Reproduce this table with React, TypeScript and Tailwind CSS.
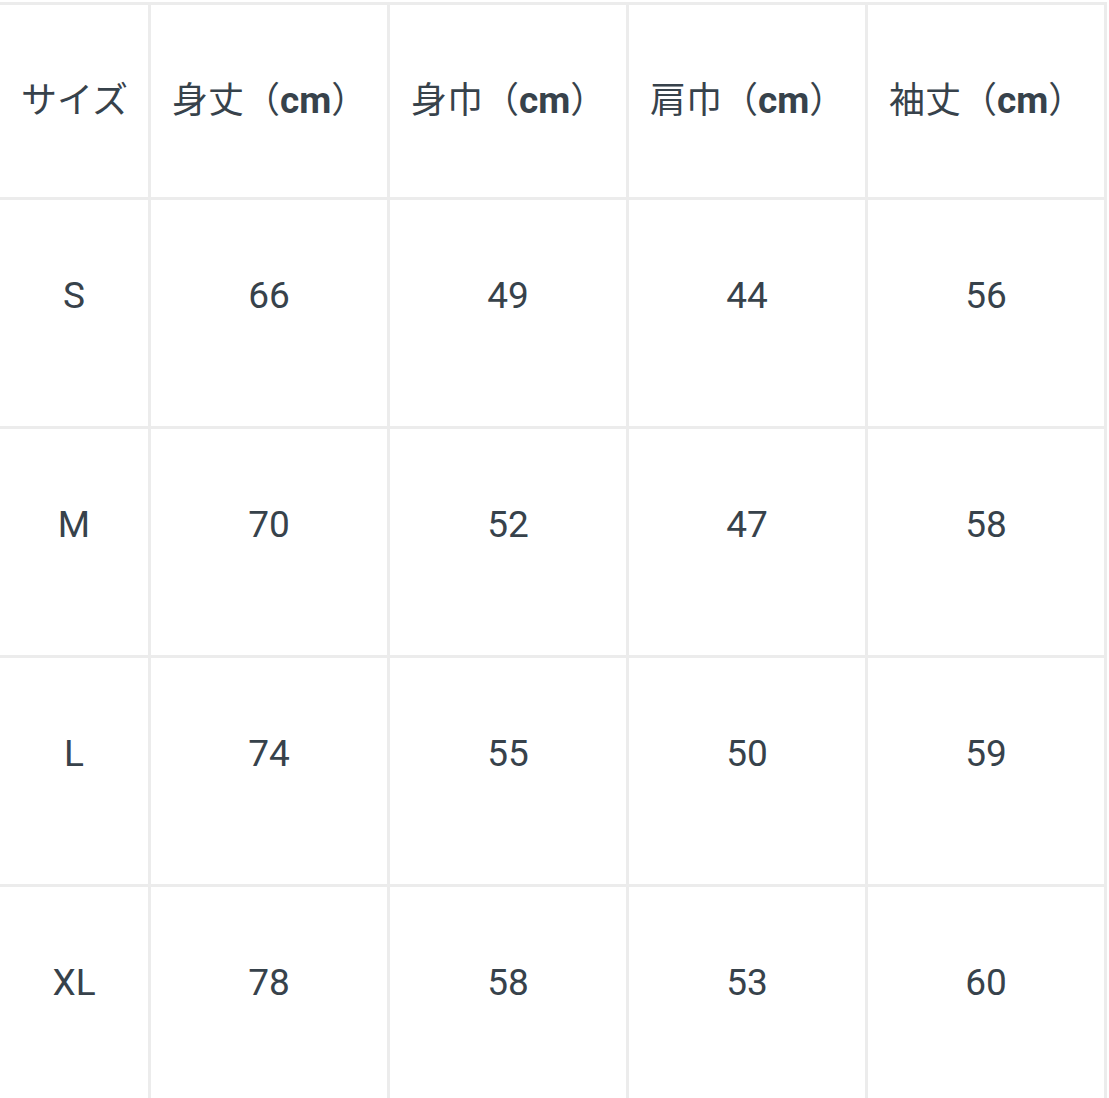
import React from "react";

const headers = ["身丈", "身巾", "肩巾", "袖丈"];
const rows: [string, string, string, string, string][] = [
  ["S", "66", "49", "44", "56"],
  ["M", "70", "52", "47", "58"],
  ["L", "74", "55", "50", "59"],
  ["XL", "78", "58", "53", "60"],
];

const font = { fontFamily: "Roboto, 'Noto Sans CJK JP', sans-serif" };

export default function App() {
  return (
    <div className="h-[1098px] w-[1109px] overflow-hidden bg-white pt-[2px]" style={font}>
      <div className="grid w-[1107px] grid-cols-[148px_236px_236px_236px_236px] grid-rows-[192px_226px_226px_226px_226px] gap-[3px] bg-[#ececec] pt-[3px] pr-[3px] text-[37px] text-[#37424b]">
        <div className="flex items-center bg-white pl-[21px] text-[36px]">サイズ</div>
        {headers.map((h) => (
          <div key={h} className="flex items-center whitespace-nowrap bg-white pl-[21px] text-[36px]">
            <span>{h}</span>
            <span>（</span>
            <span className="text-[37px] font-bold">cm</span>
            <span>）</span>
          </div>
        ))}
        {rows.map((r) =>
          r.map((c, i) => (
            <div key={r[0] + i} className="flex items-center justify-center bg-white pb-[36px] leading-none">
              {c}
            </div>
          ))
        )}
      </div>
    </div>
  );
}
